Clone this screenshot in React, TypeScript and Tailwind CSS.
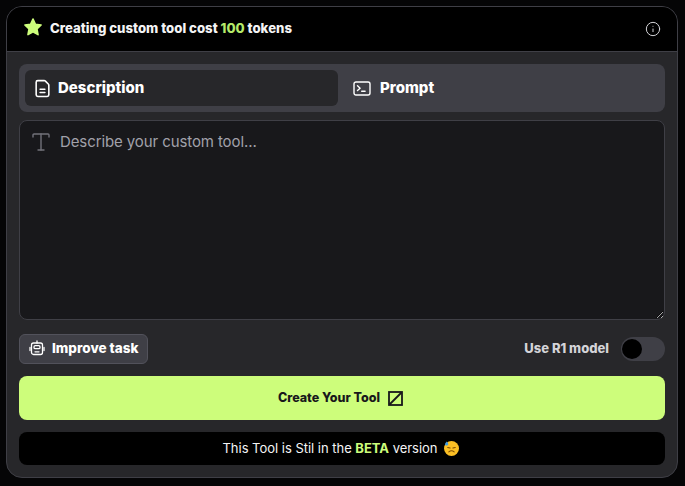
import { Info, Type } from "lucide-react";

export default function App() {
  return (
    <div className="min-h-[486px] bg-[#050506] pt-1.5 pl-1.5 pr-[7px] font-['Inter',sans-serif]">
      <div className="h-[472px] flex flex-col rounded-2xl border border-[#3f3f46] bg-[#27272a] overflow-hidden">
        {/* Header */}
        <div className="h-[45px] shrink-0 flex items-center justify-between bg-black border-b border-[#3f3f46] pl-4 pr-4">
          <div className="flex items-center gap-[7px]">
            <svg width="20" height="20" viewBox="0 0 24 24" className="mb-1" fill="#cdfd7b" stroke="#cdfd7b" strokeWidth="2" strokeLinejoin="round">
              <path d="M12 2.5l2.9 6.3 6.8.8-5 4.7 1.3 6.8-6-3.4-6 3.4 1.3-6.8-5-4.7 6.8-.8z" />
            </svg>
            <span className="text-[13.2px] font-extrabold text-[#f4f4f5]">
              Creating custom tool cost <span className="text-[#b5ea6a]">100</span> tokens
            </span>
          </div>
          <Info size={16} className="text-[#d4d4d8]" strokeWidth={1.5} />
        </div>

        <div className="flex-1 flex flex-col px-3 pt-3">
          {/* Tabs */}
          <div className="h-12 shrink-0 grid grid-cols-[313px_1fr] gap-[7px] rounded-lg bg-[#3f3f46] p-1.5">
            <button className="flex items-center gap-[6px] rounded-md bg-[#27272a] pl-2 text-white">
              <svg width="19" height="19" viewBox="0 0 24 24" fill="none" stroke="currentColor" strokeWidth="2" strokeLinecap="round" strokeLinejoin="round">
                <path d="M6 22a2 2 0 0 1-2-2V4a2 2 0 0 1 2-2h8a2.4 2.4 0 0 1 1.7.7l3.6 3.6A2.4 2.4 0 0 1 20 8v12a2 2 0 0 1-2 2z" />
                <path d="M9 13h6M9 17h6" />
              </svg>
              <span className="text-[15px] font-extrabold">Description</span>
            </button>
            <button className="flex items-center gap-[9px] rounded-md pl-2 text-white">
              <svg width="18" height="15" viewBox="0 0 18 15" fill="none" stroke="currentColor" strokeWidth="1.4" strokeLinecap="round" strokeLinejoin="round">
                <rect x="1" y="1" width="16" height="13" rx="2" />
                <path d="M4.5 4.8l2.6 2.4-2.6 2.4M8.7 10.2h3.4" />
              </svg>
              <span className="text-[15px] font-extrabold">Prompt</span>
            </button>
          </div>

          {/* Textarea */}
          <div className="relative mt-2 h-[200px] shrink-0">
            <Type size={24} strokeWidth={1.4} className="absolute left-[10px] top-[10px] text-[#71717a]" />
            <textarea
              className="h-full w-full rounded-lg border border-[#3f3f46] bg-[#18181b] pl-10 pt-[10px] text-[15px] tracking-[-0.1px] text-white outline-none placeholder:text-[#a1a1aa]"
              placeholder="Describe your custom tool..."
            />
          </div>

          {/* Options */}
          <div className="mt-[14px] flex h-[30px] shrink-0 items-center justify-between">
            <button className="flex h-[30px] items-center gap-[7px] rounded-md border border-[#52525b] bg-[#3f3f46] pb-[2px] pl-[9px] pr-[9px] text-white">
              <svg width="16" height="16" viewBox="0 0 16 16" fill="none" stroke="currentColor" strokeWidth="1.3" strokeLinecap="round" strokeLinejoin="round">
                <rect x="2.5" y="3" width="11" height="11.5" rx="2" />
                <path d="M8 1v2M1 7.5v3M15 7.5v3" />
                <rect x="5" y="5.7" width="6" height="3" rx="1.2" />
                <path d="M6 11.8h4" />
              </svg>
              <span className="text-[13.5px] font-extrabold">Improve task</span>
            </button>
            <div className="flex items-center gap-3 mb-[1px]">
              <span className="text-[13px] font-extrabold text-[#d4d4d8]">Use R1 model</span>
              <div className="flex h-6 w-11 items-center rounded-full bg-[#3f3f46]">
                <div className="h-[20px] w-[20px] ml-[1px] rounded-full bg-black" />
              </div>
            </div>
          </div>

          {/* Create */}
          <button className="mt-3 flex h-11 shrink-0 items-center justify-center gap-2 rounded-lg bg-[#cdfd7b] pr-[3px] text-[#18181b]">
            <span className="text-[12.5px] font-extrabold">Create Your Tool</span>
            <svg width="15" height="15" viewBox="0 0 15 15" fill="none" stroke="currentColor" strokeWidth="1.8">
              <rect x="1" y="1" width="13" height="13" />
              <path d="M1.5 13.5l12-12" />
            </svg>
          </button>

          {/* Beta */}
          <div className="mt-3 flex h-[33px] shrink-0 items-center justify-center gap-[6px] rounded-lg bg-black pr-[3px] text-[13px] tracking-[-0.02px] text-[#f4f4f5]">
            <span>
              This Tool is Stil in the <span className="font-bold text-[#cdfd7b]">BETA</span> version
            </span>
            <svg width="15" height="15" viewBox="0 0 14 14">
              <circle cx="7" cy="7" r="7" fill="#fbbf24" />
              <path d="M3.5 6l2.2.6M10.5 6l-2.2.6M4.5 10.2c1.4-1.2 3.6-1.2 5 0" fill="none" stroke="#7c4a03" strokeWidth="1" strokeLinecap="round" />
              <path d="M2.6 0.4c-1.2 1.3-2 2.4-1.4 3.4.8 1 2.6.4 2.8-.8.1-.8-.6-1.6-1.4-2.6z" fill="#3b9be8" />
            </svg>
          </div>
        </div>
      </div>
    </div>
  );
}
